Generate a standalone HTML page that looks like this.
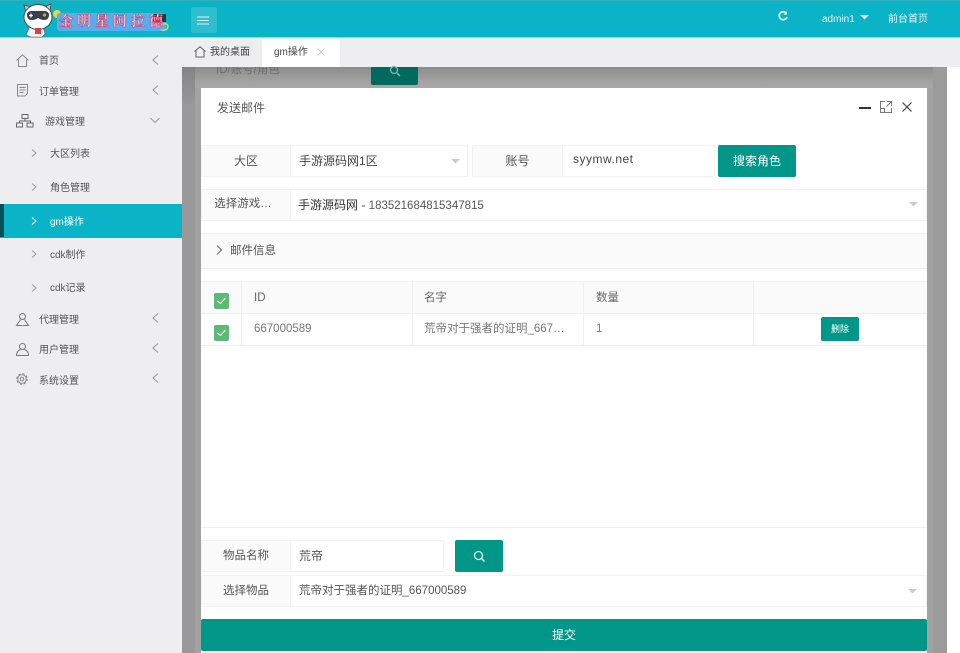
<!DOCTYPE html>
<html lang="zh"><head><meta charset="utf-8"><style>
*{box-sizing:border-box}
html,body{margin:0;padding:0;width:960px;height:653px;overflow:hidden;background:#fff;font-family:"Liberation Sans","Noto Sans CJK SC",sans-serif;color:#555}
#w{position:absolute;left:0;top:0;width:960px;height:653px;filter:blur(.3px)}
.a{position:absolute;white-space:nowrap}
svg{position:absolute;fill:none;overflow:visible}
.m{font-size:10px;color:#555;line-height:14px}
.lab{background:#fafafa;border:1px solid #f2f2f2;text-align:center;font-size:12px;color:#555}
.box{background:#fff;border:1px solid #f2f2f2;font-size:12px;color:#444}
.th{font-size:11.5px;color:#666;line-height:16px}
</style></head><body><div id="w">
<div class="a" style="left:0;top:0;width:960px;height:38px;background:#0ab3c6;border-top:1px solid #2fb0bd;border-bottom:1px solid #7fdde6"></div>
<div class="a" style="left:0;top:38px;width:182px;height:615px;background:#eeeef0"></div>
<div class="a" style="left:182px;top:38px;width:778px;height:29px;background:#eeeef0"></div>

<!-- dimmed content -->
<div class="a" style="left:182px;top:67px;width:765px;height:586px;background:#a2a2a2"></div>
<div class="a" style="left:182px;top:67px;width:765px;height:21px;background:linear-gradient(180deg,#8c8c8c,#a0a0a0 60%,#a8a8a8)"></div>
<div class="a" style="left:182px;top:67px;width:13px;height:586px;background:linear-gradient(180deg,#848484,#999 40px,#999)"></div>
<div class="a" style="left:933px;top:67px;width:14px;height:586px;background:#9b9b9b"></div>
<div class="a" style="left:195px;top:67px;width:163px;height:18px;overflow:hidden">
<div class="a" style="left:21px;top:-5px;font-size:11.500px;line-height:16px;color:#6e6e6e">ID/账号/角色</div></div>
<div class="a" style="left:371px;top:67px;width:47px;height:18px;background:#006a60;border-radius:0 0 2px 2px"></div>
<svg style="left:389px;top:66px" width="12" height="12"><circle cx="5" cy="4" r="3.500" stroke="#88b5b0" stroke-width="1.300"/><path d="M8 7l3 3" stroke="#88b5b0" stroke-width="1.500"/></svg>

<!-- logo -->
<svg style="left:0;top:0" width="180" height="38">
<path d="M26 12l-2-7 7 2M44 7l7-3-1 8" stroke="#444" stroke-width=".8" fill="#f3b6a6"/>
<path d="M30 26l-4 9 5 2h11l3-3-2-8z" fill="#f4f4f4" stroke="#555" stroke-width=".6"/>
<ellipse cx="38" cy="17" rx="14" ry="12.500" fill="#fff" stroke="#444" stroke-width=".9"/>
<path d="M27 15q0-4 5-4h12q5 0 5 4q0 5-5 5q-3 0-6-2q-3 2-6 2q-5 0-5-5z" fill="#3a3f4c"/>
<path d="M31 13.500v4M29 15.500h4" stroke="#fff" stroke-width="1.300"/><circle cx="44.500" cy="15" r="1.600" fill="#d9a13a"/>
<rect x="35" y="28" width="6" height="6" fill="#d9433f"/>
<circle cx="57" cy="14" r="4" fill="#f4d03f"/>
<rect x="57" y="13" width="109" height="18" rx="3" fill="#55aeef"/>
<rect x="153" y="14" width="13" height="8" fill="#2a3344"/>
<path d="M161 25q6-3 7 1q0 5-7 4" stroke="#e8d84a" stroke-width="1.300"/>
</svg>
<div class="a" style="left:59px;top:12px;font-size:14px;line-height:19px;letter-spacing:4px;color:#fbd0da;font-family:'Noto Serif CJK SC',serif;font-weight:700;-webkit-text-stroke:.5px #ea3a64">金明星阿拉德</div>

<div class="a" style="left:191px;top:7px;width:26px;height:26px;background:#2fbecf;border-radius:2px"></div>
<svg style="left:197px;top:16px" width="14" height="9"><path d="M0 1h12M0 4.500h12M0 8h12" stroke="#d8f5f8"/></svg>

<svg style="left:777px;top:10px" width="12" height="12" viewBox="0 0 12 12"><path d="M9.300 3.200A4 4 0 1 0 10 7" stroke="#eafafb" stroke-width="1.700"/><path d="M10 1v3.500H6.500z" fill="#eafafb"/></svg>
<div class="a" style="left:822px;top:13px;font-size:10px;line-height:14px;color:#e6f8fa">admin1</div>
<svg style="left:860px;top:15px" width="10" height="6"><path d="M0 0h9l-4.500 4.500z" fill="#d5f3f6"/></svg>
<div class="a" style="left:888px;top:13px;font-size:10px;line-height:14px;color:#e6f8fa">前台首页</div>

<!-- sidebar -->
<svg style="left:16px;top:54px" width="14" height="14" viewBox="0 0 14 14"><path d="M.5 6.500L6.500.8l6 5.700M2.500 5.500V12.500h8V5.500" stroke="#888"/></svg>
<div class="a m" style="left:39px;top:55px">首页</div>
<svg style="left:152px;top:55px" width="7" height="10"><path d="M6 .5L1 5l5 4.500" stroke="#999"/></svg>

<svg style="left:17px;top:84px" width="12" height="13" viewBox="0 0 12 13"><path d="M.5.500h10v9l-2.500 2.500H.5zM2.500 3.500h6M2.500 6h6M2.500 8.500h4" stroke="#888"/></svg>
<div class="a m" style="left:39px;top:86px">订单管理</div>
<svg style="left:152px;top:85px" width="7" height="10"><path d="M6 .5L1 5l5 4.500" stroke="#999"/></svg>

<svg style="left:16px;top:114px" width="18" height="14" viewBox="0 0 18 14"><rect x="6" y=".5" width="6" height="4" stroke="#666"/><rect x=".5" y="9" width="6" height="4" stroke="#666"/><rect x="11" y="9" width="6" height="4" stroke="#666"/><path d="M9 4.500V7M3.500 9V7h11v2" stroke="#666"/></svg>
<div class="a m" style="left:45px;top:116px">游戏管理</div>
<svg style="left:150px;top:117px" width="10" height="7"><path d="M.5 1L5 5.500 9.500 1" stroke="#999"/></svg>

<div class="a m" style="left:50px;top:148px">大区列表</div>
<div class="a m" style="left:50px;top:182px">角色管理</div>
<div class="a" style="left:0;top:204px;width:182px;height:34px;background:#0ab3c6"></div>
<div class="a" style="left:0;top:204px;width:4px;height:33px;background:#07505a"></div>
<div class="a m" style="left:50px;top:216px;color:#fff">gm操作</div>
<div class="a m" style="left:50px;top:249px">cdk制作</div>
<div class="a m" style="left:50px;top:282px">cdk记录</div>
<svg style="left:31px;top:149px" width="6" height="9"><path d="M1 .5L5 4 1 7.500" stroke="#999"/></svg>
<svg style="left:31px;top:183px" width="6" height="9"><path d="M1 .5L5 4 1 7.500" stroke="#999"/></svg>
<svg style="left:31px;top:217px" width="6" height="9"><path d="M1 .5L5 4 1 7.500" stroke="#fff"/></svg>
<svg style="left:31px;top:250px" width="6" height="9"><path d="M1 .5L5 4 1 7.500" stroke="#999"/></svg>
<svg style="left:31px;top:284px" width="6" height="9"><path d="M1 .5L5 4 1 7.500" stroke="#999"/></svg>

<svg style="left:16px;top:313px" width="13" height="13" viewBox="0 0 13 13"><circle cx="6.500" cy="3.500" r="3" stroke="#777"/><path d="M4.500 6.500L.5 12.500h5.500M8.500 6.500l4 6H6.500" stroke="#777"/></svg>
<div class="a m" style="left:39px;top:314px">代理管理</div>
<svg style="left:152px;top:313px" width="7" height="10"><path d="M6 .5L1 5l5 4.500" stroke="#999"/></svg>

<svg style="left:16px;top:343px" width="13" height="13" viewBox="0 0 13 13"><circle cx="6.500" cy="3.500" r="3" stroke="#777"/><path d="M4.500 6.500Q.5 8 .5 12.500h12Q12.500 8 8.500 6.500" stroke="#777"/></svg>
<div class="a m" style="left:39px;top:344px">用户管理</div>
<svg style="left:152px;top:343px" width="7" height="10"><path d="M6 .5L1 5l5 4.500" stroke="#999"/></svg>

<svg style="left:16px;top:373px" width="12" height="12" viewBox="0 0 12 12"><circle cx="6" cy="6" r="1.800" stroke="#777" stroke-width=".9"/><circle cx="6" cy="6" r="4.200" stroke="#777" stroke-width=".7"/><circle cx="6" cy="6" r="5.200" stroke="#777" stroke-width="1" stroke-dasharray="2.400 1.690"/></svg>
<div class="a m" style="left:39px;top:375px">系统设置</div>
<svg style="left:152px;top:373px" width="7" height="10"><path d="M6 .5L1 5l5 4.500" stroke="#999"/></svg>

<!-- tabs -->
<svg style="left:194px;top:46px" width="12" height="12" viewBox="0 0 12 12"><path d="M.5 5.500L6 .7l5.500 4.800M2 4.500V11h8V4.500" stroke="#666"/></svg>
<div class="a m" style="left:210px;top:46px;color:#444">我的桌面</div>
<div class="a" style="left:262px;top:39px;width:78px;height:28px;background:#fff"></div>
<div class="a m" style="left:274px;top:46px;color:#444">gm操作</div>
<svg style="left:317px;top:48px" width="8" height="8"><path d="M.5.500l7 7M7.500.500l-7 7" stroke="#ccc"/></svg>

<!-- modal -->
<div class="a" style="left:201px;top:88px;width:726px;height:565px;background:#fff"></div>
<div class="a" style="left:217px;top:100px;font-size:12px;line-height:16px;color:#555">发送邮件</div>
<svg style="left:859px;top:103px" width="12" height="8"><path d="M0 5h12" stroke="#333" stroke-width="2"/></svg>
<svg style="left:880px;top:101px" width="12" height="12" viewBox="0 0 12 12"><path d="M5 .5H.5v11h11V7M7 .5h4.500V5M11 1L6.500 5.500M.5 7.500h4v4" stroke="#777"/></svg>
<svg style="left:902px;top:102px" width="10" height="10"><path d="M.5.500l9 9M9.500.500l-9 9" stroke="#444" stroke-width="1.200"/></svg>

<!-- row 1 -->
<div class="a lab" style="left:201px;top:145px;width:90px;height:32px;line-height:30px;font-size:12px">大区</div>
<div class="a box" style="left:290px;top:145px;width:178px;height:32px;line-height:31px;padding-left:8px">手游源码网1区</div>
<svg style="left:451px;top:159px" width="10" height="5"><path d="M0 0h9L4.500 4.500z" fill="#ccc"/></svg>
<div class="a lab" style="left:472px;top:145px;width:91px;height:32px;line-height:30px">账号</div>
<div class="a box" style="left:562px;top:145px;width:153px;height:32px;line-height:27px;padding-left:10px;font-size:12px;letter-spacing:.5px;color:#444">syymw.net</div>
<div class="a" style="left:718px;top:145px;width:78px;height:32px;background:#009688;border-radius:2px;color:#fff;font-size:12px;line-height:32px;text-align:center">搜索角色</div>

<!-- row 2 -->
<div class="a lab" style="left:201px;top:189px;width:90px;height:32px;line-height:28px;font-size:11.500px;padding-right:6px">选择游戏…</div>
<div class="a box" style="left:290px;top:189px;width:637px;height:32px;line-height:30px;padding-left:7px;color:#333">手游源码网 - <span style="color:#555;font-size:11.500px">183521684815347815</span></div>
<svg style="left:909px;top:202px" width="10" height="5"><path d="M0 0h9L4.500 4.500z" fill="#ccc"/></svg>

<!-- collapse -->
<div class="a" style="left:201px;top:233px;width:726px;height:36px;background:#fafafa;border-top:1px solid #f0f0f0;border-bottom:1px solid #eee"></div>
<svg style="left:216px;top:245px" width="7" height="10"><path d="M1 .5L5.500 5 1 9.500" stroke="#666"/></svg>
<div class="a" style="left:230px;top:244px;font-size:11.500px;line-height:15px;color:#555">邮件信息</div>

<!-- table -->
<div class="a" style="left:201px;top:281px;width:726px;height:33px;background:#fafafa;border-top:1px solid #f0f0f0;border-bottom:1px solid #eee"></div>
<div class="a" style="left:201px;top:345px;width:726px;height:1px;background:#eee"></div>
<div class="a" style="left:241px;top:281px;width:1px;height:65px;background:#f0f0f0"></div>
<div class="a" style="left:412px;top:281px;width:1px;height:65px;background:#f0f0f0"></div>
<div class="a" style="left:583px;top:281px;width:1px;height:65px;background:#f0f0f0"></div>
<div class="a" style="left:753px;top:281px;width:1px;height:65px;background:#f0f0f0"></div>
<div class="a" style="left:214px;top:293px;width:15px;height:16px;background:#5fb878;border-radius:2px"></div>
<svg style="left:217px;top:297px" width="9" height="8"><path d="M.5 4l3 2.500L8.500 1" stroke="#fff"/></svg>
<div class="a" style="left:214px;top:325px;width:15px;height:16px;background:#5fb878;border-radius:2px"></div>
<svg style="left:217px;top:329px" width="9" height="8"><path d="M.5 4l3 2.500L8.500 1" stroke="#fff"/></svg>
<div class="a th" style="left:254px;top:290px">ID</div>
<div class="a th" style="left:424px;top:290px">名字</div>
<div class="a th" style="left:596px;top:290px">数量</div>
<div class="a th" style="left:254px;top:321px;color:#777">667000589</div>
<div class="a th" style="left:424px;top:321px;color:#777">荒帝对于强者的证明_667…</div>
<div class="a th" style="left:596px;top:321px;color:#777">1</div>
<div class="a" style="left:821px;top:317px;width:38px;height:24px;background:#009688;border-radius:2px;color:#fff;font-size:9px;line-height:24px;text-align:center">删除</div>

<!-- bottom -->
<div class="a" style="left:201px;top:527px;width:726px;height:1px;background:#f0f0f0"></div>
<div class="a lab" style="left:201px;top:540px;width:90px;height:32px;line-height:30px;font-size:11.500px">物品名称</div>
<div class="a box" style="left:290px;top:540px;width:154px;height:32px;line-height:30px;padding-left:8px;color:#555">荒帝</div>
<div class="a" style="left:455px;top:540px;width:48px;height:32px;background:#009688;border-radius:2px"></div>
<svg style="left:473px;top:550px" width="13" height="13"><circle cx="5.500" cy="5.500" r="4" stroke="#d8f0ee" stroke-width="1.300"/><path d="M8.500 8.500l3 3" stroke="#d8f0ee" stroke-width="1.600"/></svg>
<div class="a lab" style="left:201px;top:575px;width:90px;height:32px;line-height:30px;font-size:11.500px">选择物品</div>
<div class="a box" style="left:290px;top:575px;width:637px;height:32px;line-height:31px;padding-left:8px;color:#555;font-size:11.500px">荒帝对于强者的证明_667000589</div>
<svg style="left:908px;top:589px" width="10" height="5"><path d="M0 0h9L4.500 4.500z" fill="#ccc"/></svg>
<div class="a" style="left:201px;top:619px;width:726px;height:32px;background:#009688;border-radius:2px;color:#fff;font-size:12px;line-height:32px;text-align:center">提交</div>
</div></body></html>
